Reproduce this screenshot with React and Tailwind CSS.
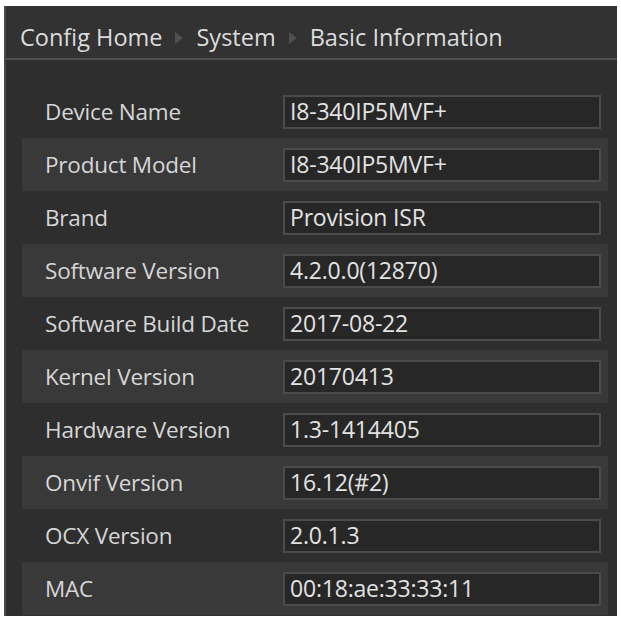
import React from 'react';

const rows = [
  ['Device Name', 'I8-340IP5MVF+'],
  ['Product Model', 'I8-340IP5MVF+'],
  ['Brand', 'Provision ISR'],
  ['Software Version', '4.2.0.0(12870)'],
  ['Software Build Date', '2017-08-22'],
  ['Kernel Version', '20170413'],
  ['Hardware Version', '1.3-1414405'],
  ['Onvif Version', '16.12(#2)'],
  ['OCX Version', '2.0.1.3'],
  ['MAC', '00:18:ae:33:33:11'],
];

const Arrow = () => (
  <span className="mx-[13px] inline-block h-0 w-0 border-y-[6px] border-l-[8px] border-y-transparent border-l-[#505050]" />
);

const App = () => {
  return (
    <div className="min-h-screen bg-white pt-[6px] pl-[4px]" style={{ fontFamily: '"Open Sans", "Noto Sans", sans-serif' }}>
      <div className="w-[613px] h-[610px] overflow-hidden bg-[#2e2e2e] border-l-2 border-[#4a4a4a]">
        <div className="flex h-[54px] items-center border-b-2 border-[#4f4f4f] bg-[#323232] pt-[12px] pl-[14px] text-[23.5px] text-[#dcdcdc]">
          <span>Config Home</span>
          <Arrow />
          <span>System</span>
          <Arrow />
          <span>Basic Information</span>
        </div>
        <div className="pt-[25px] pl-[16px] pr-[9px]">
          {rows.map(([label, value], i) => (
            <div
              key={label}
              className={`flex h-[53px] items-center ${i % 2 === 1 ? 'bg-[#393939]' : 'bg-[#2e2e2e]'}`}
            >
              <div className="w-[261px] pl-[23px] text-[22.5px] tracking-[-0.2px] text-[#d6d6d6]">{label}</div>
              <div className="flex h-[34px] w-[318px] items-center border-2 border-[#4b4b4b] bg-[#272727] pl-[5px] text-[23px] tracking-[-0.2px] text-[#e2e2e2]">
                {value}
              </div>
            </div>
          ))}
        </div>
      </div>
    </div>
  );
};

export default App;
